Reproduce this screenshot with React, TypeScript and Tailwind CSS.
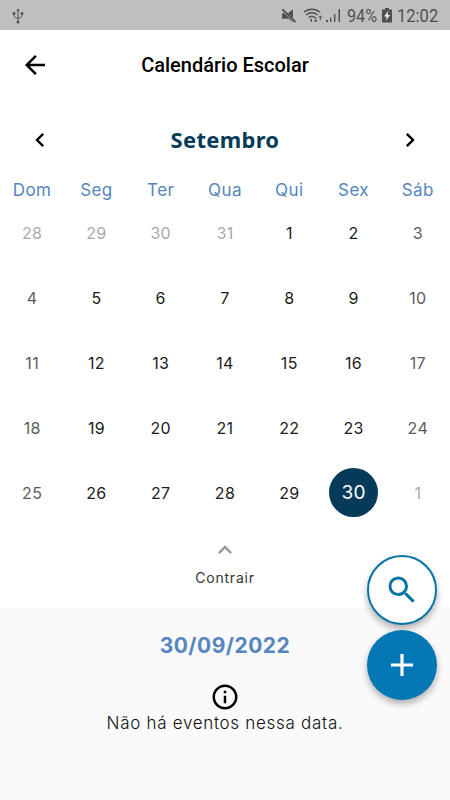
import React, { useState } from 'react';
import { clsx } from 'clsx';
import {
  MdAdd,
  MdArrowBack,
  MdChevronLeft,
  MdChevronRight,
  MdExpandLess,
  MdInfoOutline,
  MdSearch,
} from 'react-icons/md';

const WEEKDAYS = ['Dom', 'Seg', 'Ter', 'Qua', 'Qui', 'Sex', 'Sáb'];

// 28/08/2022 is the first Sunday shown in the grid
const DAYS = Array.from({ length: 35 }, (_, index) => {
  const date = new Date(2022, 7, 28 + index);
  return {
    key: index,
    day: date.getDate(),
    outside: date.getMonth() !== 8,
    weekend: date.getDay() === 0 || date.getDay() === 6,
  };
});

function UsbIcon() {
  return (
    <svg className="mt-[2px] ml-3 h-4 w-3" viewBox="0 0 12 16" fill="none" stroke="currentColor" strokeWidth="1">
      <path d="M6 2v12M2 5v2.5C2 9.5 4 10 6 10s4-.5 4-2.5V5" />
      <path d="M6 .5 4.2 3h3.6z" fill="currentColor" stroke="none" />
      <circle cx="2" cy="5.5" r="1.4" fill="currentColor" stroke="none" />
      <path d="M8.7 4.3h2.6v2.4H8.7z" fill="currentColor" stroke="none" />
      <circle cx="6" cy="14" r="1.5" fill="currentColor" stroke="none" />
    </svg>
  );
}

function StatusBar() {
  return (
    <div className="flex h-[30px] items-center justify-between bg-[#bfbfbf] font-['Roboto',sans-serif] text-[#505050]">
      <UsbIcon />
      <div className="flex items-center pt-[2px] pr-[12px]">
        {/* muted */}
        <svg className="mr-[6px] h-4 w-4" viewBox="0 0 16 16" fill="currentColor">
          <path d="M1 5.2h2.4l8.6 8.6v.4L7.6 10.8H1zM12 1.2v9L7 5.2z" />
          <path d="m1.5 1.5 13 12.5" stroke="currentColor" strokeWidth="1.8" />
        </svg>
        {/* wifi */}
        <svg className="mr-[3px] h-4 w-5" viewBox="0 0 20 16" fill="none" stroke="currentColor" strokeWidth="1.5">
          <path d="M.8 4.3c4.6-4.2 11.6-4.2 16.2 0M3.2 7c3.3-3 8.1-3 11.4 0M5.7 9.8c1.9-1.8 4.5-1.8 6.4 0" />
          <path d="M9 10.2 6.9 12.2 9 14.3z" fill="currentColor" stroke="none" />
          <path d="M12.7 9.2v4.8m-1.5-1.7 1.5 1.7 1.5-1.7M17.3 12.3V7.8m-1.5 1.7 1.5-1.7 1.5 1.7" strokeWidth="1" />
        </svg>
        {/* signal */}
        <svg className="mr-[6px] h-4 w-[15px]" viewBox="0 0 15 16" fill="currentColor">
          <path d="M0 12h2v2H0zM4 9.5h1.4V14H4zM8 6h1.4v8H8zM12.5 1H14v13h-1.5z" />
        </svg>
        <span className="w-[31px] text-[18px] leading-none">
          <span className="inline-block origin-left scale-x-[0.9]">94%</span>
        </span>
        <svg className="mr-[5px] ml-1 h-4 w-[10px]" viewBox="0 0 10 16">
          <path d="M3 0h4v1.5h3V14.5H0V1.5h3z" fill="currentColor" />
          <path d="M6.2 3 2 8.4h2.6l-.7 4.2L8.1 7H5.6z" fill="#eee" />
        </svg>
        <span className="w-[41px] text-[18px] leading-none">
          <span className="inline-block origin-left scale-x-[0.92]">12:02</span>
        </span>
      </div>
    </div>
  );
}

export default function App() {
  const [selected, setSelected] = useState(33);

  return (
    <main className="relative flex h-[800px] w-[450px] flex-col overflow-hidden bg-white font-['Inter','Noto_Sans',sans-serif]">
      <StatusBar />

      <header className="grid h-[70px] grid-cols-[70px_1fr_70px] items-center">
        <button className="justify-self-center" aria-label="Voltar">
          <MdArrowBack className="h-[30px] w-[30px] text-black" />
        </button>
        <h1 className="text-center font-['Roboto',sans-serif] text-[20px] font-medium text-black">
          Calendário Escolar
        </h1>
      </header>

      {/* Month switcher */}
      <div className="flex h-[79px] items-center justify-between px-[26px]">
        <button aria-label="Mês anterior">
          <MdChevronLeft className="h-7 w-7 text-black" />
        </button>
        <h2 className="font-['Noto_Sans',sans-serif] text-[22px] font-bold tracking-[0.3px] text-[#053b59]">
          Setembro
        </h2>
        <button aria-label="Próximo mês">
          <MdChevronRight className="h-7 w-7 text-black" />
        </button>
      </div>

      <div className="grid h-[21px] grid-cols-7 text-center text-[17px] leading-[22px] tracking-[0.4px] text-[#5586bd]">
        {WEEKDAYS.map((name) => (
          <span key={name}>{name}</span>
        ))}
      </div>

      <div className="grid h-[325px] grid-cols-7 grid-rows-5">
        {DAYS.map((item) => (
          <button
            key={item.key}
            className="flex items-center justify-center text-[16px] tracking-[0.3px]"
            onClick={() => setSelected(item.key)}
          >
            <span
              className={clsx(
                'flex h-[49px] w-[49px] items-center justify-center rounded-full',
                selected === item.key
                  ? 'bg-[#053b59] pt-[2px] text-[19px] text-white'
                  : item.outside
                    ? 'text-[#aaa]'
                    : item.weekend
                      ? 'text-[#5c5c5c]'
                      : 'text-[#1c1c1c]'
              )}
            >
              {item.day}
            </span>
          </button>
        ))}
      </div>

      <button className="flex h-[83px] flex-col items-center pt-[11px]">
        <MdExpandLess className="h-7 w-7 text-[#999]" />
        <span className="mt-[4px] text-[14px] leading-5 tracking-[0.8px] text-[#333]">Contrair</span>
      </button>

      {/* Events of the selected day */}
      <section className="flex flex-1 flex-col items-center bg-[#fafafa] pt-[24px]">
        <h3 className="text-[21px] leading-7 font-bold tracking-[0.5px] text-[#5586c0]">30/09/2022</h3>
        <MdInfoOutline className="mt-[22px] h-[30px] w-[30px] text-black" />
        <p className="text-[17px] leading-[22px] font-light tracking-[0.7px] text-[#101010]">
          Não há eventos nessa data.
        </p>
      </section>

      {/* Floating actions, over both sections */}
      <div className="absolute top-[555px] right-[13px] flex flex-col gap-[5px]">
        <button
          className="flex h-[70px] w-[70px] items-center justify-center rounded-full border-[2.5px] border-[#0874a6] bg-white shadow-[0_4px_7px_rgba(0,0,0,0.3)]"
          aria-label="Buscar"
        >
          <MdSearch className="h-9 w-9 text-[#0874a6]" />
        </button>
        <button
          className="flex h-[70px] w-[70px] items-center justify-center rounded-full bg-[#0378b5] shadow-[0_4px_7px_rgba(0,0,0,0.3)]"
          aria-label="Adicionar"
        >
          <MdAdd className="h-[38px] w-[38px] text-white" />
        </button>
      </div>
    </main>
  );
}
